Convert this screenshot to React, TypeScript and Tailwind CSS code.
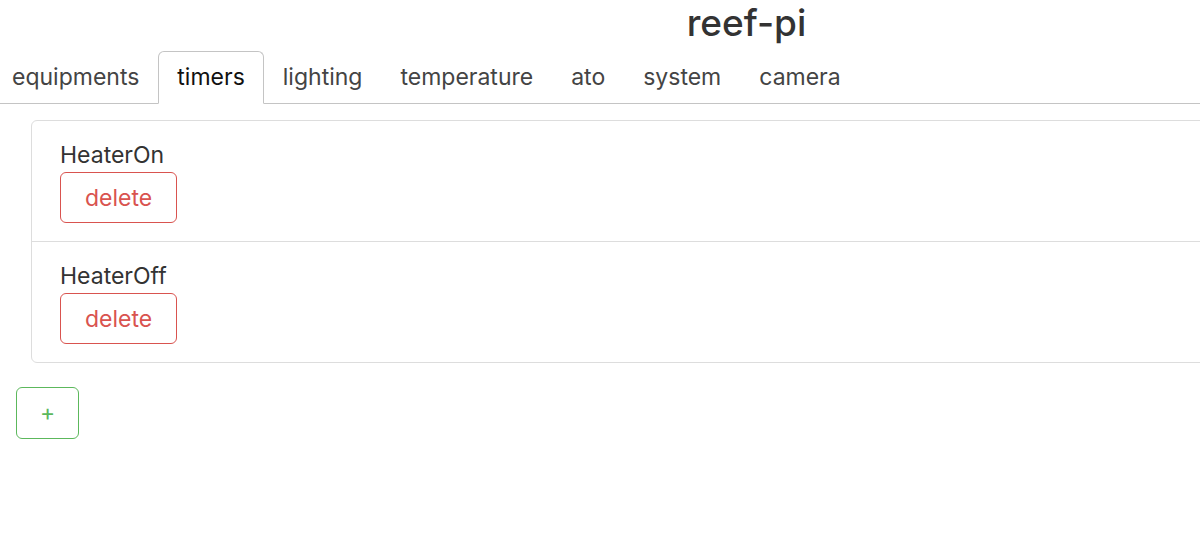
import React from "react";

const tabs = ["equipments", "timers", "lighting", "temperature", "ato", "system", "camera"];

function Item({ name }: { name: string }) {
  return (
    <div className="px-[28px] pt-[20px] pb-[18px]">
      <div className="text-[23px] leading-[28px] text-[#333]">{name}</div>
      <button className="mt-[3px] flex h-[51px] w-[117px] items-center justify-center rounded-[6px] border border-[#d9534f] bg-white text-[23px] leading-[28px] text-[#d9534f]">
        delete
      </button>
    </div>
  );
}

export default function App() {
  return (
    <div className="h-[558px] w-[1200px] overflow-hidden bg-white" style={{ fontFamily: "Inter, 'Open Sans', sans-serif" }}>
      <div className="w-[1493px]">
        <h1 className="pb-[7px] pt-[2px] text-center text-[37px] font-medium leading-[42px] text-[#333]">reef-pi</h1>
        <div className="flex border-b border-[#c4c4c4]">
          <div className="ml-[-7px] flex">
            {tabs.map((t) =>
              t === "timers" ? (
                <div
                  key={t}
                  className="-mb-px rounded-t-[6px] border border-[#c4c4c4] border-b-white bg-white px-[18px] py-[11px] text-[23px] leading-[28px] text-[#111]"
                >
                  {t}
                </div>
              ) : (
                <div key={t} className="border border-transparent px-[18px] py-[11px] text-[23px] leading-[28px] text-[#444]">
                  {t}
                </div>
              )
            )}
          </div>
        </div>
        <div className="px-[16px] pt-[16px]">
          <div className="ml-[15px] rounded-[6px] border border-[#ddd]">
            <Item name="HeaterOn" />
            <div className="border-t border-[#ddd]">
              <Item name="HeaterOff" />
            </div>
          </div>
          <button className="mt-[24px] flex h-[52px] w-[63px] items-center justify-center rounded-[6px] border border-[#5cb85c] bg-white text-[23px] leading-[28px] text-[#5cb85c]">
            +
          </button>
        </div>
      </div>
    </div>
  );
}
